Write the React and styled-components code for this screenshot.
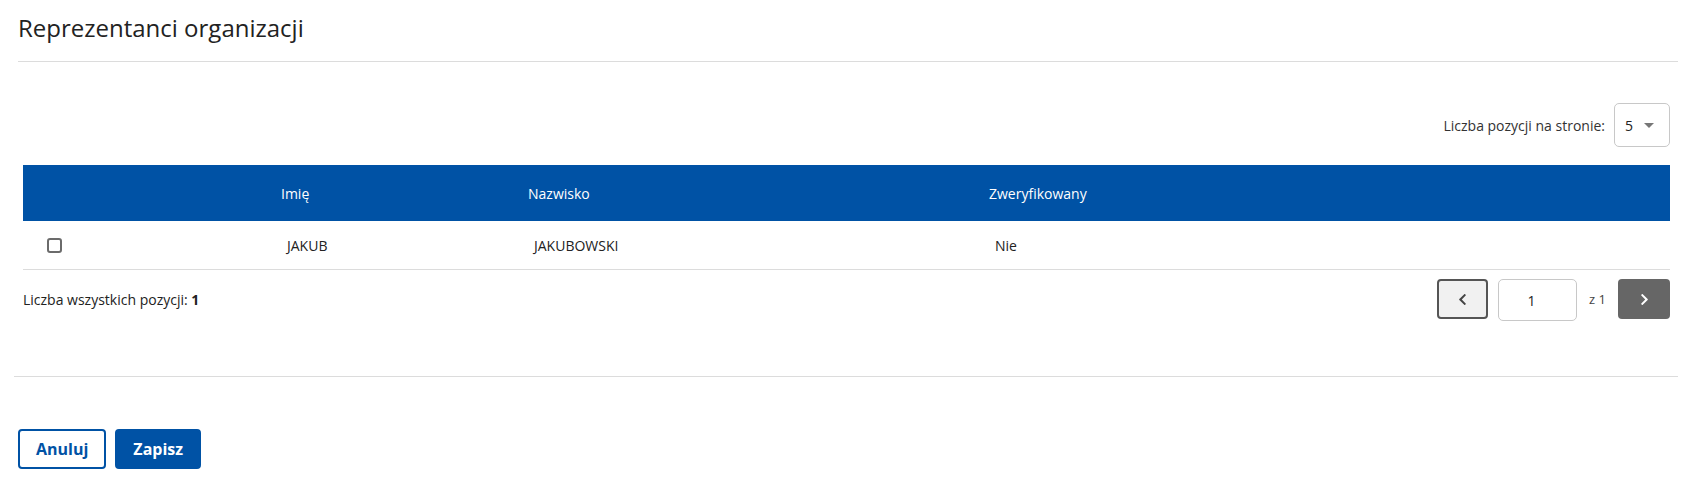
import React, { useState } from "react";
import styled, { createGlobalStyle } from "styled-components";
import { FaChevronLeft, FaChevronRight } from "react-icons/fa";

const GlobalStyle = createGlobalStyle`
  body {
    margin: 0;
    background: #fff;
    font-family: "Open Sans", "Liberation Sans", sans-serif;
    color: #222;
  }
`;

const Page = styled.div`
  padding: 11px 19px 0 14px;
`;

const TitleBar = styled.div`
  margin-left: 4px;
  padding-bottom: 17px;
  border-bottom: 1px solid #dcdcdc;
`;

const Title = styled.h1`
  margin: 0;
  font-size: 24px;
  font-weight: 400;
  line-height: 33px;
  color: #222;
`;

const Content = styled.div`
  padding: 41px 8px 0 9px;
`;

const PerPageRow = styled.div`
  display: flex;
  justify-content: flex-end;
  align-items: center;
  gap: 9px;
  margin-bottom: 18px;
`;

const Label = styled.span`
  font-size: 14px;
  color: #333;
`;

const SelectBox = styled.div`
  flex: 0 0 56px;
  width: 56px;
  min-width: 56px;
  height: 44px;
  box-sizing: border-box;
  border: 1px solid #c8c8c8;
  border-radius: 5px;
  display: flex;
  align-items: center;
  justify-content: space-between;
  padding: 0 15px 0 10px;
  font-size: 14px;
  color: #222;
`;

const Caret = styled.span`
  width: 0;
  height: 0;
  border-left: 5px solid transparent;
  border-right: 5px solid transparent;
  border-top: 5px solid #777;
`;

const Table = styled.table`
  width: 100%;
  border-collapse: collapse;
  table-layout: fixed;
  font-size: 14px;
`;

const HeadCell = styled.th`
  background: #0052a5;
  color: #fff;
  font-weight: 400;
  text-align: left;
  height: 56px;
  padding: 0 0 0 10px;
  vertical-align: middle;
`;

const BodyCell = styled.td`
  height: 48px;
  padding: 0 0 0 ${(p) => (p.$first ? "24px" : "16px")};
  border-bottom: 1px solid #dcdcdc;
  vertical-align: middle;
  color: #222;
`;

const CheckBox = styled.span`
  display: block;
  width: 15px;
  height: 15px;
  box-sizing: border-box;
  border: 2px solid #6b6b6b;
  border-radius: 3px;
  background: ${(p) => (p.$checked ? "#0052a5" : "#fff")};
  cursor: pointer;
`;

const Footer = styled.div`
  display: flex;
  justify-content: space-between;
  align-items: center;
  margin-top: 7px;
`;

const Total = styled.span`
  font-size: 14px;
  color: #222;
  b {
    font-weight: 700;
  }
`;

const Pager = styled.div`
  display: flex;
  align-items: center;
  gap: 10px;
`;

const PagerButton = styled.button`
  width: ${(p) => (p.$dark ? "52px" : "51px")};
  height: 40px;
  box-sizing: border-box;
  border-radius: 4px;
  border: ${(p) => (p.$dark ? "none" : "2px solid #555")};
  background: ${(p) => (p.$dark ? "#666" : "#f1f1f1")};
  color: ${(p) => (p.$dark ? "#fff" : "#444")};
  display: flex;
  align-items: center;
  justify-content: center;
  font-size: 13px;
  padding: 0;
  cursor: pointer;
`;

const PageInput = styled.input`
  width: 79px;
  height: 42px;
  box-sizing: border-box;
  border: 1px solid #c8c8c8;
  border-radius: 5px;
  text-align: center;
  padding: 0 12px 0 0;
  font-family: "Open Sans", "Liberation Sans", sans-serif;
  font-size: 14px;
  color: #222;
  margin-top: 2px;
`;

const Of = styled.span`
  font-size: 13px;
  color: #444;
  margin: 0 2px;
`;

const Divider = styled.div`
  border-top: 1px solid #dcdcdc;
  margin-top: 55px;
`;

const Actions = styled.div`
  display: flex;
  gap: 9px;
  padding: 52px 0 0 4px;
`;

const ActionButton = styled.button`
  height: 40px;
  box-sizing: border-box;
  padding: 0 16px;
  border-radius: 4px;
  border: 2px solid #0052a5;
  background: ${(p) => (p.$primary ? "#0052a5" : "#fff")};
  color: ${(p) => (p.$primary ? "#fff" : "#0052a5")};
  font-family: "Open Sans", "Liberation Sans", sans-serif;
  font-size: 16px;
  font-weight: 700;
  cursor: pointer;
`;

const rows = [{ id: 1, first: "JAKUB", last: "JAKUBOWSKI", verified: "Nie" }];

export default function App() {
  const [checked, setChecked] = useState({});
  const [page, setPage] = useState("1");

  return (
    <Page>
      <GlobalStyle />
      <TitleBar>
        <Title>Reprezentanci organizacji</Title>
      </TitleBar>
      <Content>
        <PerPageRow>
          <Label>Liczba pozycji na stronie:</Label>
          <SelectBox>
            5<Caret />
          </SelectBox>
        </PerPageRow>
        <Table>
          <colgroup>
            <col style={{ width: "248px" }} />
            <col style={{ width: "247px" }} />
            <col style={{ width: "461px" }} />
            <col />
          </colgroup>
          <thead>
            <tr>
              <HeadCell />
              <HeadCell>Imię</HeadCell>
              <HeadCell>Nazwisko</HeadCell>
              <HeadCell>Zweryfikowany</HeadCell>
            </tr>
          </thead>
          <tbody>
            {rows.map((r) => (
              <tr key={r.id}>
                <BodyCell $first>
                  <CheckBox
                    $checked={!!checked[r.id]}
                    onClick={() => setChecked({ ...checked, [r.id]: !checked[r.id] })}
                  />
                </BodyCell>
                <BodyCell>{r.first}</BodyCell>
                <BodyCell>{r.last}</BodyCell>
                <BodyCell>{r.verified}</BodyCell>
              </tr>
            ))}
          </tbody>
        </Table>
        <Footer>
          <Total>
            Liczba wszystkich pozycji: <b>{rows.length}</b>
          </Total>
          <Pager>
            <PagerButton>
              <FaChevronLeft />
            </PagerButton>
            <PageInput value={page} onChange={(e) => setPage(e.target.value)} />
            <Of>z 1</Of>
            <PagerButton $dark>
              <FaChevronRight />
            </PagerButton>
          </Pager>
        </Footer>
      </Content>
      <Divider />
      <Actions>
        <ActionButton>Anuluj</ActionButton>
        <ActionButton $primary>Zapisz</ActionButton>
      </Actions>
    </Page>
  );
}
